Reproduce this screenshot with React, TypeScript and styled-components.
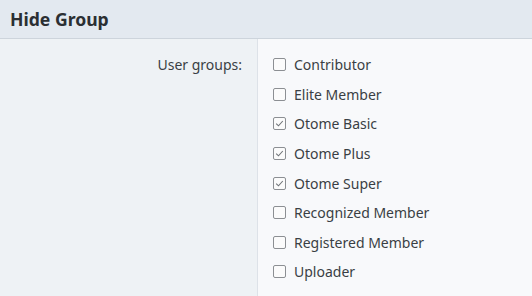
import React from 'react';
import styled, { createGlobalStyle } from 'styled-components';

const Global = createGlobalStyle`
  html, body { margin: 0; padding: 0; background: #f8f9fb; }
  body { font-family: "Noto Sans", "Open Sans", sans-serif; color: #2f3337; }
`;

const Panel = styled.div`
  width: 532px;
  height: 296px;
  background: #f8f9fb;
  overflow: hidden;
`;

const Header = styled.h2`
  margin: 0;
  height: 39px;
  box-sizing: border-box;
  padding: 0 10px;
  display: flex;
  align-items: center;
  font-size: 17.6px;
  font-weight: 700;
  color: #2b2f33;
  background: #e3e9f0;
  border-bottom: 1px solid #cdd4dc;
`;

const Row = styled.div`
  display: grid;
  grid-template-columns: 258px 1fr;
  height: 257px;
`;

const Label = styled.div`
  background: #eef2f5;
  border-right: 1px solid #dde2e8;
  text-align: right;
  padding: 16px 15px 0 0;
  font-size: 14px;
  color: #3a3f44;
`;

const List = styled.ul`
  list-style: none;
  margin: 0;
  padding: 11px 0 0 15px;
`;

const Item = styled.li`
  display: flex;
  align-items: center;
  gap: 8px;
  height: 29.6px;
  font-size: 14px;
  color: #3a3f44;
`;

const Box = styled.span<{ $on: boolean }>`
  width: 13px;
  height: 13px;
  box-sizing: border-box;
  border: 1px solid #8c8f93;
  border-radius: 2px;
  background: #fbfbfb;
  display: flex;
  align-items: center;
  justify-content: center;
`;

const groups: [string, boolean][] = [
  ['Contributor', false],
  ['Elite Member', false],
  ['Otome Basic', true],
  ['Otome Plus', true],
  ['Otome Super', true],
  ['Recognized Member', false],
  ['Registered Member', false],
  ['Uploader', false],
];

const App: React.FC = () => (
  <>
    <Global />
    <Panel>
      <Header>Hide Group</Header>
      <Row>
        <Label>User groups:</Label>
        <List>
          {groups.map(([name, on]) => (
            <Item key={name}>
              <Box $on={on}>
                {on && (
                  <svg width="9" height="9" viewBox="0 0 9 9">
                    <path d="M1.2 4.6 L3.5 6.8 L7.8 2" fill="none" stroke="#6f7377" strokeWidth="1.1" />
                  </svg>
                )}
              </Box>
              {name}
            </Item>
          ))}
        </List>
      </Row>
    </Panel>
  </>
);

export default App;
